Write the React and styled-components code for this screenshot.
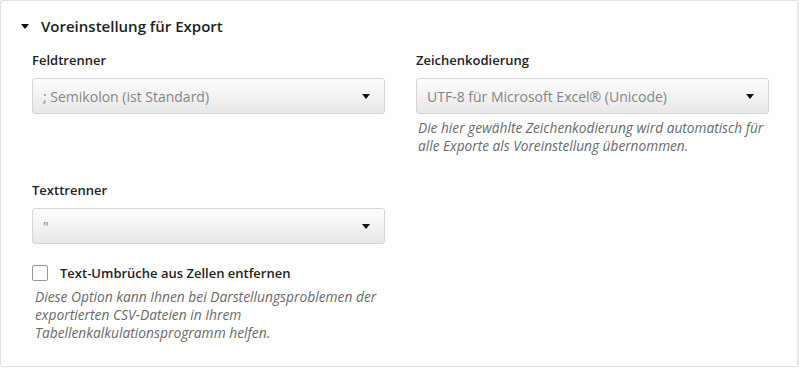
import React from 'react';
import styled, { createGlobalStyle } from 'styled-components';

const GlobalStyle = createGlobalStyle`
  body {
    margin: 0;
    background: #ffffff;
    font-family: "Open Sans", "Noto Sans", sans-serif;
  }
`;

const Panel = styled.section`
  box-sizing: border-box;
  width: 798px;
  height: 367px;
  border: 1px solid #e2e2e2;
  border-radius: 2px;
  box-shadow: 1px 1px 0 #ececec;
  padding: 15px 30px 0 31px;
  color: #222;
`;

const Header = styled.h2`
  display: flex;
  align-items: center;
  margin: 0 0 0 -11px;
  height: 20px;
  font-size: 15px;
  font-weight: 600;
  color: #1e1e1e;
  gap: 12px;
`;

const Caret = styled.span`
  width: 0;
  height: 0;
  border-left: 4px solid transparent;
  border-right: 4px solid transparent;
  border-top: 5px solid #111;
`;

const Grid = styled.div`
  display: grid;
  grid-template-columns: 353px 353px;
  column-gap: 31px;
  row-gap: 26px;
  margin-top: 15px;
`;

const Field = styled.div`
  display: flex;
  flex-direction: column;
`;

const Label = styled.label`
  font-size: 13px;
  font-weight: 600;
  line-height: 18px;
  color: #222;
  margin-bottom: 9px;
`;

const Select = styled.div`
  box-sizing: border-box;
  height: 36px;
  display: flex;
  align-items: center;
  justify-content: space-between;
  padding: 0 14px 0 10px;
  border: 1px solid #d6d6d6;
  border-radius: 3px;
  background: linear-gradient(#fdfdfd, #e8e8e8);
  font-size: 14px;
  color: #868686;
`;

const Arrow = styled.span`
  width: 0;
  height: 0;
  border-left: 4.5px solid transparent;
  border-right: 4.5px solid transparent;
  border-top: 5px solid #111;
`;

const Help = styled.p`
  margin: ${(p) => p.$top || 5}px 0 0 ${(p) => p.$indent || 2}px;
  font-size: ${(p) => p.$size || 13.7}px;
  font-style: italic;
  line-height: 18px;
  color: #6a6a6a;
`;

const CheckRow = styled.label`
  display: flex;
  align-items: center;
  gap: 12px;
  margin-top: 20px;
  font-size: 13px;
  font-weight: 600;
  color: #222;
`;

const Box = styled.input`
  appearance: none;
  box-sizing: border-box;
  width: 16px;
  height: 16px;
  margin: 0;
  border: 1px solid #9a9a9a;
  border-radius: 2px;
  background: #fff;
`;

const Dropdown = ({ value }) => (
  <Select>
    <span>{value}</span>
    <Arrow />
  </Select>
);

export default function App() {
  return (
    <>
      <GlobalStyle />
      <Panel>
        <Header>
          <Caret />
          Voreinstellung für Export
        </Header>
        <Grid>
          <Field>
            <Label>Feldtrenner</Label>
            <Dropdown value="; Semikolon (ist Standard)" />
          </Field>
          <Field>
            <Label>Zeichenkodierung</Label>
            <Dropdown value="UTF-8 für Microsoft Excel® (Unicode)" />
            <Help>
              Die hier gewählte Zeichenkodierung wird automatisch für alle
              Exporte als Voreinstellung übernommen.
            </Help>
          </Field>
          <Field>
            <Label>Texttrenner</Label>
            <Dropdown value={'"'} />
            <CheckRow>
              <Box type="checkbox" />
              Text-Umbrüche aus Zellen entfernen
            </CheckRow>
            <Help $top={6} $indent={3} $size={13.8}>
              Diese Option kann Ihnen bei Darstellungsproblemen der
              exportierten CSV-Dateien in Ihrem Tabellenkalkulationsprogramm
              helfen.
            </Help>
          </Field>
        </Grid>
      </Panel>
    </>
  );
}
